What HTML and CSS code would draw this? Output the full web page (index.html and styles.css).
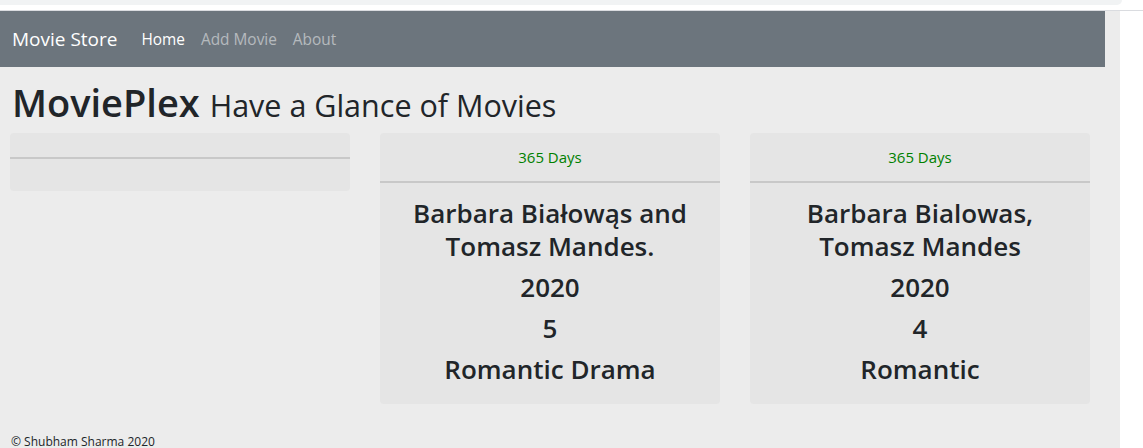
FILE: index.html
```html
<!DOCTYPE html>
<html>
<head>
<meta charset="utf-8">
<link rel="stylesheet" href="styles.css">
</head>
<body>
<div class="chrome"><div class="chrome-bar"></div></div>
<div class="page">
  <nav class="navbar">
    <a class="brand">Movie Store</a>
    <a class="nav-link active">Home</a>
    <a class="nav-link">Add Movie</a>
    <a class="nav-link">About</a>
  </nav>
  <h1 class="title">MoviePlex <small>Have a Glance of Movies</small></h1>
  <div class="cards">
    <div class="card">
      <div class="card-header empty"></div>
      <div class="card-body empty"></div>
    </div>
    <div class="card">
      <div class="card-header">365 Days</div>
      <div class="card-body">
        <h3>Barbara Białowąs and Tomasz Mandes.</h3>
        <h3>2020</h3>
        <h3>5</h3>
        <h3>Romantic Drama</h3>
      </div>
    </div>
    <div class="card">
      <div class="card-header">365 Days</div>
      <div class="card-body">
        <h3>Barbara Bialowas, Tomasz Mandes</h3>
        <h3>2020</h3>
        <h3>4</h3>
        <h3>Romantic</h3>
      </div>
    </div>
  </div>
  <footer class="footer">© Shubham Sharma 2020</footer>
</div>
</body>
</html>
```
FILE: styles.css
```css
html, body {
  margin: 0;
  padding: 0;
  background: #ffffff;
  font-family: "Open Sans", "Noto Sans", sans-serif;
  color: #212529;
  overflow: hidden;
}
.chrome {
  height: 10px;
  border-bottom: 1px solid #dadce0;
  background: #ffffff;
}
.chrome-bar {
  width: 1122px;
  height: 5px;
  background: #f1f3f4;
  border-bottom-right-radius: 6px;
}
.page {
  width: 1120px;
  background: #ececec;
  height: 437px;
}
.navbar {
  width: 1105px;
  height: 56px;
  background: #6c757d;
  display: flex;
  align-items: center;
  box-sizing: border-box;
  padding-left: 12px;
}
.brand {
  color: #ffffff;
  font-size: 19px;
  margin-right: 24px;
}
.nav-link {
  color: rgba(255, 255, 255, 0.5);
  font-size: 15.4px;
  margin-right: 16px;
}
.nav-link.active {
  color: #ffffff;
}
.title {
  margin: 0;
  padding: 11px 0 0 12px;
  font-size: 38px;
  font-weight: 600;
  line-height: 48px;
}
.title small {
  font-size: 30.5px;
  font-weight: 400;
}
.cards {
  display: flex;
  gap: 30px;
  padding: 4px 0 0 10px;
  align-items: flex-start;
}
.card {
  width: 340px;
  background: #e5e5e5;
  border-radius: 4px;
}
.card-header {
  text-align: center;
  color: #008000;
  font-size: 15px;
  line-height: 24px;
  padding: 12px 0;
  border-bottom: 2px solid #c8c8c8;
}
.card-header.empty {
  padding: 0;
  height: 24px;
}
.card-body {
  padding: 14px 20px 10px;
  text-align: center;
}
.card-body.empty {
  height: 32px;
  padding: 0;
}
.card-body h3 {
  margin: 0 0 8px;
  font-size: 26px;
  font-weight: 600;
  line-height: 33px;
}
.footer {
  font-size: 12px;
  line-height: 16px;
  padding: 30px 0 0 11px;
}
```
